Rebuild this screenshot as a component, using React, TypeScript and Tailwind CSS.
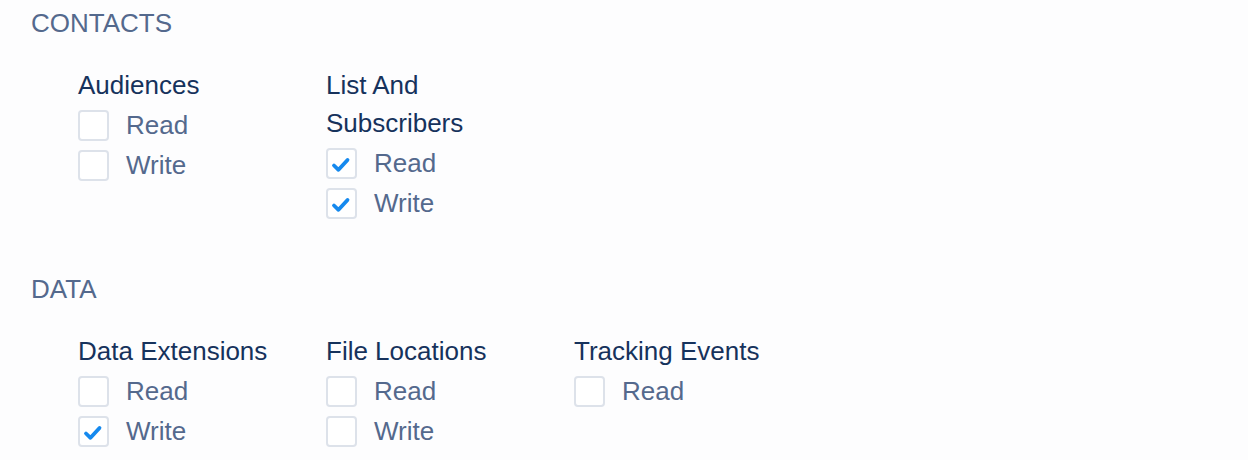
import React from "react";

type Perm = { label: string; checked: boolean };
type Group = { title: string[]; perms: Perm[] };
type Section = { name: string; groups: Group[] };

const sections: Section[] = [
  {
    name: "CONTACTS",
    groups: [
      { title: ["Audiences"], perms: [{ label: "Read", checked: false }, { label: "Write", checked: false }] },
      { title: ["List And", "Subscribers"], perms: [{ label: "Read", checked: true }, { label: "Write", checked: true }] },
    ],
  },
  {
    name: "DATA",
    groups: [
      { title: ["Data Extensions"], perms: [{ label: "Read", checked: false }, { label: "Write", checked: true }] },
      { title: ["File Locations"], perms: [{ label: "Read", checked: false }, { label: "Write", checked: false }] },
      { title: ["Tracking Events"], perms: [{ label: "Read", checked: false }] },
    ],
  },
];

function Box({ checked }: { checked: boolean }) {
  return (
    <span className="w-[31px] h-[31px] shrink-0 rounded-[4px] border-2 border-[#dde2ea] bg-white flex items-center justify-center">
      {checked && (
        <svg width="31" height="31" viewBox="0 0 31 31" className="-m-[2px]">
          <path d="M8 17.5 L12.5 21.8 L21.5 12" fill="none" stroke="#1589ee" strokeWidth="3.8" strokeLinecap="round" strokeLinejoin="round" />
        </svg>
      )}
    </span>
  );
}

export default function App() {
  return (
    <div
      className="min-h-[460px] w-[1248px] bg-[#fdfdfe] pl-[31px] pt-[5px]"
      style={{ fontFamily: '"Liberation Sans", Arial, Helvetica, sans-serif' }}
    >
      {sections.map((s, i) => (
        <div key={s.name} className={i > 0 ? "mt-[48px]" : ""}>
          <div className="text-[26px] leading-[36px] text-[#54698d]">{s.name}</div>
          <div className="mt-[25px] pl-[47px] flex">
            {s.groups.map((g) => (
              <div key={g.title.join(" ")} className="w-[248px]">
                <div className="text-[26px] leading-[38px] text-[#16325c]">
                  {g.title.map((t) => (
                    <div key={t}>{t}</div>
                  ))}
                </div>
                <div className="mt-[1px] flex flex-col">
                  {g.perms.map((p) => (
                    <label key={p.label} className="h-[40px] flex items-center gap-[17px]">
                      <Box checked={p.checked} />
                      <span className="text-[26px] text-[#54698d] leading-none">{p.label}</span>
                    </label>
                  ))}
                </div>
              </div>
            ))}
          </div>
        </div>
      ))}
    </div>
  );
}
